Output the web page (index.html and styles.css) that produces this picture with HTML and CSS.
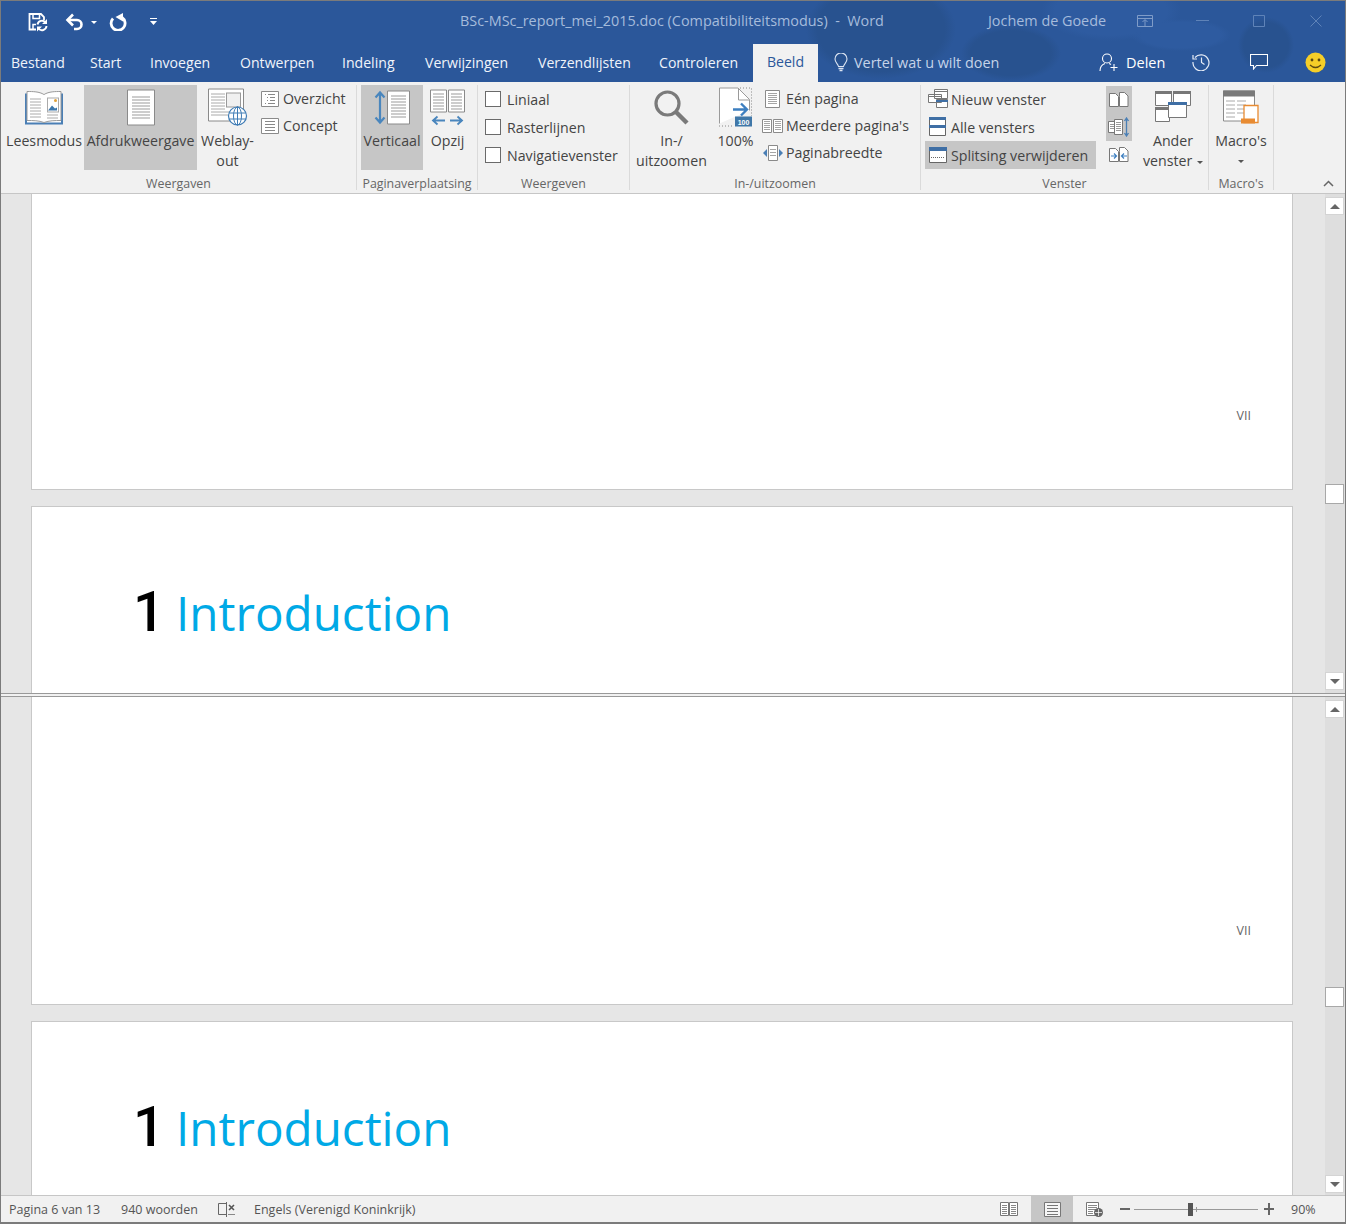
FILE: index.html
```html
<!DOCTYPE html>
<html lang="nl">
<head>
<meta charset="utf-8">
<title>BSc-MSc_report_mei_2015.doc - Word</title>
<link rel="stylesheet" href="styles.css">
</head>
<body>
<div class="window">
  <div class="chrome">
  <header class="titlebar">
    <div class="qat">
      <svg class="qi qi-save" viewBox="0 0 20 20"><path d="M8 17.500H1.500V2h11.500l3 3v3" fill="none" stroke="#fff" stroke-width="1.800"/><path d="M5 2v4.500h6.500V2M5 17.500v-5h3" fill="none" stroke="#fff" stroke-width="1.500"/><path d="M9.500 12.500a4.500 4.500 0 0 1 8-2M18.500 14a4.500 4.500 0 0 1-8 2.500" fill="none" stroke="#fff" stroke-width="1.900"/><path d="M19 7v5h-5zM9 19.500v-5h5z" fill="#fff"/></svg>
      <svg class="qi qi-undo" viewBox="0 0 20 18"><path d="M2.500 7H12a4.500 4.500 0 0 1 0 9H9" fill="none" stroke="#fff" stroke-width="2.600"/><path d="M8 1.500 2.500 7 8 12.500" fill="none" stroke="#fff" stroke-width="2.600"/></svg>
      <span class="caret caret-undo"></span>
      <svg class="qi qi-redo" viewBox="0 0 18 18"><path d="M13 4.500a7 7 0 1 1-9 1" fill="none" stroke="#fff" stroke-width="2.800"/><path d="M14 0v8.500L6.500 4z" fill="#fff"/></svg>
      <svg class="qi qi-more" viewBox="0 0 7 8"><path d="M0 0h7v1H0z" fill="#fff"/><path d="M0 3h7L3.500 7z" fill="#fff"/></svg>
    </div>
    <div class="doc-title">BSc-MSc_report_mei_2015.doc (Compatibiliteitsmodus)&nbsp; -&nbsp; Word</div>
    <div class="user">Jochem de Goede</div>
    <div class="winctl">
      <svg class="wi wi-ribbon" viewBox="0 0 16 12"><path d="M.5.500h15v11H.5zM.5 3.500h15M8 11V5M5.500 7 8 4.500 10.500 7" fill="none" stroke="#7f9cc8"/></svg>
      <svg class="wi wi-min" viewBox="0 0 13 1"><path d="M0 .5h13" stroke="#5f83b8"/></svg>
      <svg class="wi wi-max" viewBox="0 0 12 12"><path d="M.5.500h11v11H.5z" fill="none" stroke="#5f83b8"/></svg>
      <svg class="wi wi-close" viewBox="0 0 12 12"><path d="m.5.500 11 11M11.500.5l-11 11" stroke="#5f83b8"/></svg>
    </div>
  </header>

  <nav class="tabs">
    <span class="tab t-bestand">Bestand</span>
    <span class="tab t-start">Start</span>
    <span class="tab t-invoegen">Invoegen</span>
    <span class="tab t-ontwerpen">Ontwerpen</span>
    <span class="tab t-indeling">Indeling</span>
    <span class="tab t-verwijzingen">Verwijzingen</span>
    <span class="tab t-verzend">Verzendlijsten</span>
    <span class="tab t-controleren">Controleren</span>
    <span class="tab tab-active">Beeld</span>
    <span class="tellme">
      <svg class="bulb" viewBox="0 0 14 19"><path d="M4.500 13.500C4 11 1 9.500 1 6a6 6 0 0 1 12 0c0 3.500-3 5-3.500 7.500z" fill="none" stroke="#dbe4f2" stroke-width="1.100"/><path d="M4.500 15.500h5M5.500 17.500h3" stroke="#dbe4f2" stroke-width="1.300"/></svg>
      <span class="tell-text">Vertel wat u wilt doen</span>
    </span>
    <span class="share">
      <svg class="person" viewBox="0 0 19 19"><circle cx="8" cy="5.500" r="4.500" fill="none" stroke="#fff" stroke-width="1.100"/><path d="M1 18c0-4 2-6.500 5-7.500M10 10.500c1 .3 1.500.6 2 1M15 11v7M11.500 14.500h7" fill="none" stroke="#fff" stroke-width="1.100"/></svg>
      <span class="share-text">Delen</span>
    </span>
    <svg class="ti ti-hist" viewBox="0 0 18 18"><path d="M3 4.500A8 8 0 1 1 1 9" fill="none" stroke="#e6ecf6" stroke-width="1.200"/><path d="M1 2v4h4M9.500 4.500V9.500l3 2" fill="none" stroke="#e6ecf6" stroke-width="1.200"/></svg>
    <svg class="ti ti-comment" viewBox="0 0 18 16"><path d="M.5.500h17v11H6.500l-3 3.500v-3.500h-3z" fill="none" stroke="#fff" stroke-width="1.100"/></svg>
    <svg class="ti ti-smile" viewBox="0 0 21 21"><circle cx="10.500" cy="10.500" r="10" fill="#f5ce28"/><circle cx="7" cy="8" r="1.400" fill="#5c4a10"/><circle cx="14" cy="8" r="1.400" fill="#5c4a10"/><path d="M5 13q5.500 5 11 0" fill="none" stroke="#5c4a10" stroke-width="1.300"/></svg>
  </nav>
  </div>

  <section class="ribbon">
    <div class="group g-views">
      <div class="gbody">
        <div class="big b-lees">
          <svg class="bi" viewBox="0 0 38 34" width="38" height="34"><path d="M1 3v30h36V3" fill="#fff" stroke="#4a7fb5" stroke-width="2"/><path d="M2 1c6 0 12 0 17 3 5-3 11-3 17-3v29c-6 0-12 0-17 2-5-2-11-2-17-2z" fill="#fff" stroke="#9a9a9a"/><path d="M5 8.500h11M5 11.500h11M5 14.500h11M5 17.500h11M5 20.500h11M5 23.500h11M5 26.500h11" stroke="#aaa"/><rect x="22.500" y="7.500" width="11" height="14" fill="#fff" stroke="#aaa"/><path d="m23 20 4-5 3 3 2-1v3z" fill="#3d78ad"/><circle cx="30.500" cy="10" r="1.500" fill="#e0a13a"/><path d="M22 24.500h11M22 27.500h11" stroke="#aaa"/></svg>
          <span class="lbl">Leesmodus</span>
        </div>
        <div class="big b-print on">
          <svg class="bi" viewBox="0 0 28 36" width="28" height="36"><path d="M.5.500h27v35H.5z" fill="#fff" stroke="#8a8a8a"/><path d="M5 7.500h18M5 10.500h18M5 13.500h18M5 16.500h18M5 19.500h18M5 22.500h18M5 25.500h18M5 28.500h18" stroke="#9b9b9b"/></svg>
          <span class="lbl">Afdrukweergave</span>
        </div>
        <div class="big b-web">
          <svg class="bi" viewBox="0 0 40 38" width="40" height="38"><path d="M.5.500h35v32H.5z" fill="#fff" stroke="#8a8a8a"/><path d="M3 5.500h14M3 8.500h14M3 11.500h14M3 14.500h14M3 17.500h14M3 20.500h14M3 23.500h20M3 26.500h18" stroke="#aaa"/><rect x="18.500" y="4.500" width="14" height="14" fill="#f0f0f0" stroke="#999"/><circle cx="29.500" cy="27.500" r="9" fill="#fff" stroke="#3f7cb5" stroke-width="1.200"/><ellipse cx="29.500" cy="27.500" rx="4" ry="9" fill="none" stroke="#3f7cb5"/><path d="M21 24.500h17M21 30.500h17M29.500 18v19" stroke="#3f7cb5"/></svg>
          <span class="lbl">Weblay-out</span>
        </div>
        <div class="smalls s-views">
          <div class="small">
            <svg class="si" viewBox="0 0 18 16" width="18" height="16"><path d="M.5.500h17v15H.5z" fill="#fff" stroke="#8a8a8a"/><path d="M7 3.500h7M9 6.500h5M9 9.500h5M7 12.500h7M4 3.500h1M6 6.500h1M6 9.500h1M4 12.500h1" stroke="#888"/></svg>
            <span>Overzicht</span>
          </div>
          <div class="small">
            <svg class="si" viewBox="0 0 18 16" width="18" height="16"><path d="M.5.500h17v15H.5z" fill="#fff" stroke="#8a8a8a"/><path d="M4 3.500h10M4 6.500h10M4 9.500h10M4 12.500h10" stroke="#888"/></svg>
            <span>Concept</span>
          </div>
        </div>
      </div>
      <div class="glabel">Weergaven</div>
    </div>

    <div class="group g-move">
      <div class="gbody">
        <div class="big b-vert on">
          <svg class="bi" viewBox="0 0 36 34" width="36" height="34"><path d="M6 2v30M1.500 7 6 2l4.500 5M1.500 27 6 32l4.500-5" fill="none" stroke="#4a86bd" stroke-width="2.200"/><path d="M13.500.5h22v33h-22z" fill="#fff" stroke="#8a8a8a"/><path d="M17 5.500h15M17 8.500h15M17 11.500h15M17 14.500h15M17 17.500h15M17 20.500h15M17 23.500h15M17 26.500h15" stroke="#9b9b9b"/></svg>
          <span class="lbl">Verticaal</span>
        </div>
        <div class="big b-opzij">
          <svg class="bi" viewBox="0 0 36 36" width="36" height="36"><path d="M.5.500h16v22H.5zM18.500.5h16v22h-16z" fill="#fff" stroke="#8a8a8a"/><path d="M3 4.500h11M3 7.500h11M3 10.500h11M3 13.500h11M3 16.500h11M3 19.500h11M21 4.500h11M21 7.500h11M21 10.500h11M21 13.500h11M21 16.500h11M21 19.500h11" stroke="#9b9b9b"/><path d="M3 31h12M7.500 27 3 31l4.500 4M20 31h12M27.500 27l4.500 4-4.500 4" fill="none" stroke="#4a86bd" stroke-width="1.800"/></svg>
          <span class="lbl">Opzij</span>
        </div>
      </div>
      <div class="glabel">Paginaverplaatsing</div>
    </div>

    <div class="group g-show">
      <div class="gbody checks">
        <label class="check"><span class="box"></span>Liniaal</label>
        <label class="check"><span class="box"></span>Rasterlijnen</label>
        <label class="check"><span class="box"></span>Navigatievenster</label>
      </div>
      <div class="glabel">Weergeven</div>
    </div>

    <div class="group g-zoom">
      <div class="gbody">
        <div class="big b-zoom">
          <svg class="bi" viewBox="0 0 35 35" width="35" height="35"><circle cx="13.500" cy="13.500" r="11.500" fill="none" stroke="#7a7a7a" stroke-width="3.200"/><path d="m22 22 11 11" stroke="#7a7a7a" stroke-width="4.400"/></svg>
          <span class="lbl">In-/ uitzoomen</span>
        </div>
        <div class="big b-100">
          <svg class="bi" viewBox="0 0 36 40" width="36" height="40"><path d="M1.500 36V.5H20L31.500 12v11" fill="#fff" stroke="#9a9a9a"/><path d="M20.500.5V12.500h11" fill="none" stroke="#9a9a9a"/><path d="M22 .5h11.500v28M1 38.500h15" fill="none" stroke="#888" stroke-dasharray="1 2"/><path d="M15 22h14M23 16l6 6-6 6" fill="none" stroke="#3d7fc0" stroke-width="2.400"/><rect x="17" y="29" width="17" height="10" fill="#3f77a8"/><text x="25.500" y="37" class="badge">100</text></svg>
          <span class="lbl">100%</span>
        </div>
        <div class="smalls s-zoom">
          <div class="small">
            <span class="slot"><svg class="si" viewBox="0 0 15 18" width="15" height="18"><path d="M.5.500h14v17H.5z" fill="#fff" stroke="#8a8a8a"/><path d="M3 3.500h9M3 5.500h9M3 7.500h9M3 9.500h9M3 11.500h9M3 13.500h9" stroke="#a5a5a5"/></svg></span>
            <span>Eén pagina</span>
          </div>
          <div class="small">
            <span class="slot"><svg class="si" viewBox="0 0 21 14" width="21" height="14"><path d="M.5.500h9v13h-9zM11.500.5h9v13h-9z" fill="#fff" stroke="#8a8a8a"/><path d="M2 2.500h6M2 4.500h6M2 6.500h6M2 8.500h6M2 10.500h6M13 2.500h6M13 4.500h6M13 6.500h6M13 8.500h6M13 10.500h6" stroke="#a5a5a5"/></svg></span>
            <span>Meerdere pagina's</span>
          </div>
          <div class="small">
            <span class="slot"><svg class="si" viewBox="0 0 20 16" width="20" height="16"><path d="M5.500.5h9v15h-9z" fill="#fff" stroke="#8a8a8a"/><path d="M7 4.500h6M7 7.500h6M7 10.500h6" stroke="#a5a5a5"/><path d="M0 8l4-4v8zM20 8l-4-4v8z" fill="#4a7fb5"/></svg></span>
            <span>Paginabreedte</span>
          </div>
        </div>
      </div>
      <div class="glabel">In-/uitzoomen</div>
    </div>

    <div class="group g-win">
      <div class="gbody">
        <div class="smalls s-win">
          <div class="wrow">
            <span class="slot"><svg class="si" viewBox="0 0 20 20" width="20" height="20"><path d="M6.500.5h13v9h-13zM.5 5.500h13v8H.5zM8.500 10.500h11v8h-11z" fill="#fff" stroke="#777"/><path d="M6.500 2.500h13M.5 7.500h13" stroke="#777"/><path d="M8 11h12v2H8z" fill="#3f6fa5"/></svg></span>
            <span>Nieuw venster</span>
          </div>
          <div class="wrow">
            <span class="slot"><svg class="si" viewBox="0 0 17 20" width="17" height="20"><path d="M.5.500h16v18H.5z" fill="#fff" stroke="#666"/><path d="M0 0h17v3H0zM0 8h17v3H0z" fill="#3f6fa5"/></svg></span>
            <span>Alle vensters</span>
          </div>
          <div class="wrow on">
            <span class="slot"><svg class="si" viewBox="0 0 18 16" width="18" height="16"><path d="M.5.500h17v15H.5z" fill="#fff" stroke="#666"/><path d="M0 0h18v4H0z" fill="#3f6fa5"/><path d="M2 10.500h14" stroke="#666" stroke-dasharray="1 1"/></svg></span>
            <span>Splitsing verwijderen</span>
          </div>
        </div>
        <div class="tools">
          <div class="tool on">
            <svg viewBox="0 0 20 15" width="20" height="15"><path d="M.5 1.500h6l3 3v10h-9zM10.500 4.500l0-4h5l3.500 3.500v10.500h-8.500z" fill="#fff" stroke="#777"/></svg>
          </div>
          <div class="tool on">
            <svg viewBox="0 0 22 20" width="22" height="20"><path d="M.5 4.500h6v11h-6zM6.500 2.500h8v15h-8z" fill="#fff" stroke="#777"/><path d="M8 5.500h5M8 7.500h5M8 9.500h5M8 11.500h5M8 13.500h5M2 7.500h4M2 9.500h4M2 11.500h4" stroke="#999"/><path d="M18.500 1v18M16.500 4l2-3 2 3M16.500 16l2 3 2-3" fill="none" stroke="#4a7fb5" stroke-width="1.300"/></svg>
          </div>
          <div class="tool">
            <svg viewBox="0 0 20 15" width="20" height="15"><path d="M.5 1.500h6l3 3v10h-9zM10.500 4.500l0-4h5l3.500 3.500v10.500h-8.500z" fill="#fff" stroke="#777"/><path d="M2 9h5M5 6.500 7.500 9 5 11.500M18 9h-5M15 6.500 12.500 9 15 11.500" fill="none" stroke="#3d7fc0" stroke-width="1.200"/></svg>
          </div>
        </div>
        <div class="big b-other">
          <svg class="bi" viewBox="0 0 36 33" width="36" height="33"><path d="M.5.500h16v14H.5zM18.500.5h17v14h-17zM.5 16.500h14v14H.5z" fill="#fff" stroke="#777"/><path d="M0 0h17v3H0zM18 0h18v3H18zM0 16h15v3H0z" fill="#777"/><path d="M13.500 11.500h18v15h-18z" fill="#fff" stroke="#777"/><path d="M13 11h19v3H13z" fill="#3f6fa5"/></svg>
          <span class="lbl">Ander venster <i class="caret dark"></i></span>
        </div>
      </div>
      <div class="glabel">Venster</div>
    </div>

    <div class="group g-macro">
      <div class="gbody">
        <div class="big b-macro">
          <svg class="bi" viewBox="0 0 37 34" width="37" height="34"><path d="M.5.500h31v30H.5z" fill="#fff" stroke="#8a8a8a"/><path d="M0 0h32v6H0z" fill="#7a7a7a"/><path d="M3 10.500h9M14 10.500h9M3 14.500h9M14 14.500h9M3 18.500h9M14 18.500h9M3 22.500h9M14 22.500h9M3 26.500h9" stroke="#aaa"/><path d="M21 15h14v17H21z" fill="#fff" stroke="#e88b32" stroke-width="1.300"/><path d="M18 28h14v5H18z" fill="#e88b32"/></svg>
          <span class="lbl">Macro's <i class="caret dark block"></i></span>
        </div>
      </div>
      <div class="glabel">Macro's</div>
    </div>

    <svg class="collapse" viewBox="0 0 11 7" width="11" height="7"><path d="m1 6 4.500-4.500L10 6" fill="none" stroke="#666" stroke-width="1.500"/></svg>
  </section>

  <section class="pane pane-a">
    <div class="doc">
      <div class="page tail"><span class="folio">VII</span></div>
      <div class="page head"><h1 class="heading"><span class="num">1</span><span class="htext">Introduction</span></h1></div>
    </div>
    <div class="scroll">
      <span class="arrow up"></span>
      <span class="thumb"></span>
      <span class="arrow down"></span>
    </div>
  </section>
  <div class="split"></div>
  <section class="pane pane-b">
    <div class="doc">
      <div class="page tail"><span class="folio">VII</span></div>
      <div class="page head"><h1 class="heading"><span class="num">1</span><span class="htext">Introduction</span></h1></div>
    </div>
    <div class="scroll">
      <span class="arrow up"></span>
      <span class="thumb"></span>
      <span class="arrow down"></span>
    </div>
  </section>

  <footer class="status">
    <span class="st st-page">Pagina 6 van 13</span>
    <span class="st st-words">940 woorden</span>
    <svg class="st-book" viewBox="0 0 18 15" width="18" height="15"><path d="M8.500 1.500H.5v11h8M8.500 0v15" fill="none" stroke="#666"/><path d="m11 3 5 5M16 3l-5 5" stroke="#555" stroke-width="1.600"/><path d="M10 12.500h7" stroke="#888"/></svg>
    <span class="st st-lang">Engels (Verenigd Koninkrijk)</span>
    <div class="st-right">
      <svg class="vi vi-read" viewBox="0 0 18 15" width="18" height="15"><path d="M.5.500h8v13h-8zM9.500.5h8v13h-8z" fill="#fff" stroke="#777"/><path d="M2 3.500h5M2 5.500h5M2 7.500h5M2 9.500h5M2 11.500h5M11 3.500h5M11 5.500h5M11 7.500h5M11 9.500h5M11 11.500h5" stroke="#888"/></svg>
      <span class="vbtn"><svg viewBox="0 0 17 15" width="17" height="15"><path d="M.5.500h16v14H.5z" fill="#f6f6f6" stroke="#777"/><path d="M3 3.500h11M3 6.500h11M3 9.500h11M3 12.500h11" stroke="#777"/></svg></span>
      <svg class="vi vi-web" viewBox="0 0 17 15" width="17" height="15"><path d="M.5.500h12v13H.5z" fill="#fff" stroke="#777"/><path d="M2 3.500h9M2 5.500h9M2 7.500h9M2 9.500h5M2 11.500h5" stroke="#888"/><circle cx="12.500" cy="10.500" r="4.500" fill="#666"/><path d="M9 10.500h7M12.500 7v7" stroke="#fff" stroke-width=".7"/></svg>
      <span class="zbtn minus"></span>
      <span class="slider"><span class="sthumb"></span><span class="stick"></span></span>
      <span class="zbtn plus"></span>
      <span class="st st-pct">90%</span>
    </div>
  </footer>
</div>
</body>
</html>
```
FILE: styles.css
```css
* { box-sizing: border-box; }
html, body { margin: 0; padding: 0; }
body { font-family: "Open Sans", "Noto Sans", sans-serif; background: #fff; }
svg { display: block; flex: none; }

.window {
  width: 1346px; height: 1224px; overflow: hidden;
  display: flex; flex-direction: column;
  border: 1px solid #7b7b7b; border-bottom-width: 2px;
  background: #f1f1f1;
}

/* title bar */
.chrome {
  flex: none;
  background:
    radial-gradient(ellipse 75px 50px at 880px 28px, #28528f 85%, transparent 100%),
    radial-gradient(ellipse 50px 28px at 1010px 52px, #28528f 80%, transparent 100%),
    radial-gradient(ellipse 70px 30px at 1110px 10px, #2e5ba0 80%, transparent 100%),
    radial-gradient(ellipse 28px 28px at 1265px 44px, #28528f 80%, transparent 100%),
    radial-gradient(ellipse 50px 16px at 1180px 34px, #2e5ba0 80%, transparent 100%),
    #2b579a;
}
.titlebar {
  height: 43px; display: flex; align-items: center; padding-bottom: 4px;
  color: #a6bcdc; font-size: 14.4px;
}
.qat { display: flex; align-items: center; width: 459px; padding-left: 27px; margin-top: 3px; flex: none; }
.qi-save { width: 20px; height: 20px; }
.qi-undo { width: 20px; height: 18px; margin-left: 17px; }
.caret { display: inline-block; width: 0; height: 0; border: 3px solid transparent; border-top: 3px solid #fff; border-bottom: 0; }
.caret.dark { border-top-color: #555; vertical-align: middle; margin-left: 1px; }
.caret.block { display: block; margin: 9px auto 0; }
.caret-undo { margin-left: 6px; }
.qi-redo { width: 18px; height: 18px; margin-left: 12px; }
.qi-more { width: 7px; height: 8px; margin-left: 23px; }
.doc-title { width: 528px; flex: none; white-space: nowrap; }
.user { width: 149px; flex: none; white-space: nowrap; }
.winctl { display: flex; align-items: center; }
.wi-ribbon { width: 16px; height: 12px; }
.wi-min { width: 13px; height: 1px; margin-left: 43px; }
.wi-max { width: 12px; height: 12px; margin-left: 44px; }
.wi-close { width: 12px; height: 12px; margin-left: 45px; }

/* tabs */
.tabs { height: 38px; display: flex; align-items: center; color: #f0f4fa; font-size: 14.1px; padding: 0 0 2px 10px; }
.tab { flex: none; white-space: nowrap; }
.t-bestand { width: 79px; }
.t-start { width: 60px; }
.t-invoegen { width: 90px; }
.t-ontwerpen { width: 102px; }
.t-indeling { width: 83px; }
.t-verwijzingen { width: 113px; }
.t-verzend { width: 121px; }
.t-controleren { width: 94px; }
.tab-active { width: 65px; height: 38px; margin-bottom: -2px; padding-bottom: 2px; line-height: 36px; text-align: center; background: #f1f1f1; color: #2b579a; }
.tellme { display: flex; align-items: center; width: 281px; padding-left: 16px; color: #c6d4e9; flex: none; font-size: 14.4px; }
.bulb { width: 14px; height: 19px; }
.tell-text { margin-left: 6px; white-space: nowrap; }
.share { display: flex; align-items: center; width: 93px; flex: none; font-size: 14.5px; color: #fff; }
.person { width: 19px; height: 19px; }
.share-text { margin-left: 8px; }
.ti-hist { width: 18px; height: 18px; }
.ti-comment { width: 18px; height: 16px; margin-left: 40px; }
.ti-smile { width: 21px; height: 21px; margin-left: 37px; }

/* ribbon */
.ribbon { height: 112px; flex: none; display: flex; position: relative; background: #f1f1f1; border-bottom: 1px solid #c6c6c6; color: #444; font-size: 14.2px; }
.group { flex: none; display: flex; flex-direction: column; position: relative; border-right: 1px solid #dadada; height: 105px; margin-top: 3px; }
.gbody { height: 85px; display: flex; flex: none; }
.glabel { text-align: center; font-size: 12.4px; line-height: 20px; color: #666; white-space: nowrap; margin-top: 4px; }
.g-views { width: 356px; }
.g-views .gbody { padding-left: 3px; }
.g-move { width: 121px; }
.g-move .gbody { padding-left: 4px; }
.g-show { width: 152px; }
.g-zoom { width: 291px; }
.g-win { width: 288px; }
.g-macro { width: 65px; }

.big { display: flex; flex-direction: column; align-items: center; flex: none; text-align: center; }
.big .bi { height: 45px; flex: none; }
.big .lbl { line-height: 20px; padding-top: 1px; }
.on { background: #c6c6c6; }
.b-lees { width: 80px; }
.b-print { width: 113px; }
.b-web { width: 59px; margin-left: 1px; }
.b-vert { width: 62px; }
.b-opzij { width: 49px; }
.b-zoom { width: 83px; }
.b-100 { width: 45px; }
.b-other { width: 70px; margin-left: 6px; }
.b-macro { width: 64px; }
.s-views { margin-left: 4px; }
.small { display: flex; align-items: center; gap: 4px; height: 27px; white-space: nowrap; }
.s-zoom { padding-left: 4px; }
.s-zoom .small { gap: 3px; }
.slot { display: flex; justify-content: center; align-items: center; width: 21px; flex: none; }
.checks { flex-direction: column; padding-left: 7px; }
.check { display: flex; align-items: center; height: 28px; gap: 6px; white-space: nowrap; }
.box { width: 16px; height: 16px; background: #fff; border: 1px solid #6a6a6a; flex: none; }
.s-win { width: 175px; padding-left: 4px; }
.wrow { display: flex; align-items: center; height: 28px; gap: 3px; padding-left: 2px; white-space: nowrap; }
.tools { width: 26px; margin: 1px 0 0 10px; display: flex; flex-direction: column; }
.tool { height: 27.500px; display: flex; align-items: center; justify-content: center; }
.badge { font: 700 7px "Liberation Sans", sans-serif; fill: #fff; text-anchor: middle; }
.collapse { position: absolute; right: 11px; bottom: 6px; }

/* panes */
.pane { display: flex; flex: none; background: #e6e6e6; overflow: hidden; }
.pane-a { height: 499px; }
.pane-b { height: 498px; }
.doc { flex: 1; padding: 0 32px 0 30px; display: flex; flex-direction: column; gap: 16px; overflow: hidden; }
.page { background: #fff; border: 1px solid #c8c8c8; flex: none; }
.tail { display: flex; justify-content: flex-end; align-items: flex-end; padding: 0 41px 65px 0; border-top: 0; }
.pane-a .tail { height: 296px; }
.pane-b .tail { height: 308px; }
.folio { font-size: 12.5px; line-height: 16px; color: #666; }
.head { height: 260px; }
.heading { margin: 71px 0 0 102px; font-weight: 400; display: flex; align-items: baseline; line-height: 70px; }
.num { font: 500 56px Roboto, sans-serif; color: #000; width: 44px; margin-left: -1px; margin-right: -1px; }
.htext { font-size: 47.600px; color: #00a9e6; }
.scroll { width: 20px; flex: none; display: flex; flex-direction: column; padding: 3px 1px 2px 0; background: #dedede; }
.pane-a .scroll { padding-bottom: 3px; }
.arrow { display: flex; align-items: center; justify-content: center; width: 19px; height: 18px; background: #fff; border: 1px solid #d4d4d4; flex: none; }
.arrow::after { content: ""; border: 5px solid transparent; }
.up::after { border-bottom: 5px solid #666; border-top: 0; }
.down::after { border-top: 5px solid #666; border-bottom: 0; }
.thumb { width: 19px; height: 20px; background: #fff; border: 1px solid #a8a8a8; margin: 269px 0 auto; flex: none; }

.split { height: 4px; flex: none; background: #f1f1f1; border-top: 1px solid #999; border-bottom: 1px solid #999; }

/* status */
.status { flex: 1; display: flex; align-items: center; border-top: 1px solid #c6c6c6; background: #f1f1f1; font-size: 12.5px; color: #555; padding-left: 8px; }
.st { white-space: nowrap; flex: none; }
.st-page { width: 112px; }
.st-words { width: 97px; }
.st-book { margin-right: 18px; }
.st-lang { width: 746px; }
.st-right { display: flex; align-items: center; height: 100%; }
.vbtn { width: 42px; height: 100%; background: #c6c6c6; display: flex; align-items: center; justify-content: center; margin: 0 13px; }
.zbtn { width: 12px; height: 12px; position: relative; margin-left: 16px; flex: none; }
.zbtn::before { content: ""; position: absolute; left: 1px; right: 1px; top: 5px; height: 2px; background: #666; }
.plus::after { content: ""; position: absolute; top: 0; bottom: 0; left: 5px; width: 2px; background: #666; }
.slider { width: 124px; height: 1px; background: #999; position: relative; margin-left: 3px; flex: none; }
.plus { margin-left: 5px; }
.sthumb { position: absolute; left: 54px; top: -6px; width: 5px; height: 13px; background: #555; }
.stick { position: absolute; left: 62px; top: -2px; width: 1px; height: 5px; background: #999; }
.st-pct { margin-left: 16px; }
```
